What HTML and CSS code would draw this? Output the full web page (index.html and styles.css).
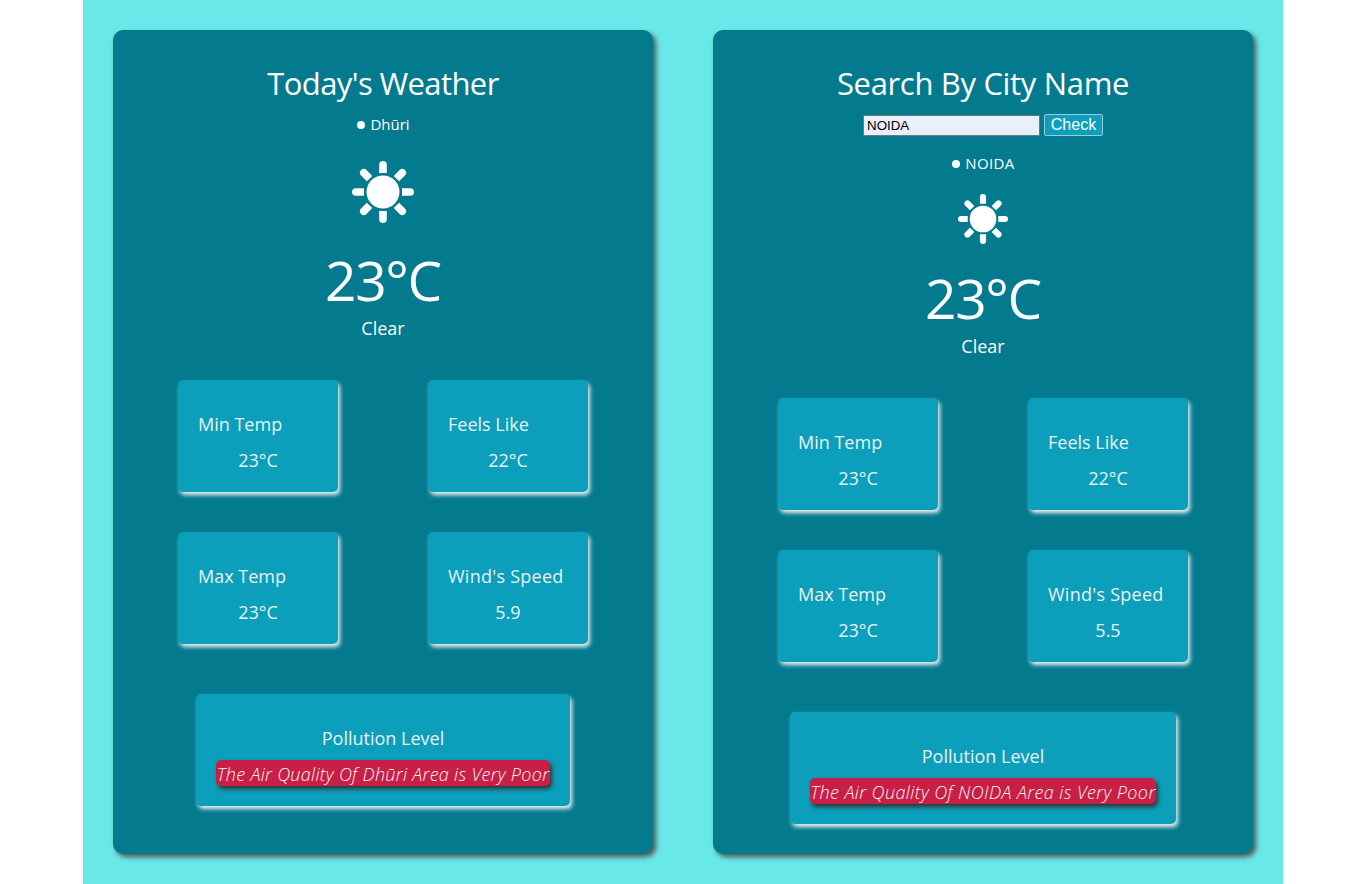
FILE: index.html
```html
<!DOCTYPE html>
<html lang="en">
<head>
<meta charset="utf-8">
<title>Weather</title>
<link rel="stylesheet" href="styles.css">
</head>
<body>
<svg class="defs" width="0" height="0" aria-hidden="true">
  <symbol id="sun" viewBox="0 0 62 62">
    <circle cx="31" cy="31" r="16.5"/>
    <path id="ray" d="M27.2 12V3.8a3.8 3.8 0 0 1 7.6 0V12z"/>
    <use href="#ray" transform="rotate(45 31 31)"/>
    <use href="#ray" transform="rotate(90 31 31)"/>
    <use href="#ray" transform="rotate(135 31 31)"/>
    <use href="#ray" transform="rotate(180 31 31)"/>
    <use href="#ray" transform="rotate(225 31 31)"/>
    <use href="#ray" transform="rotate(270 31 31)"/>
    <use href="#ray" transform="rotate(315 31 31)"/>
  </symbol>
</svg>
<main class="page">
  <section class="panel">
    <h1 class="title title-today">Today's Weather</h1>
    <div class="place"><span class="dot"></span><span class="city">Dhūri</span></div>
    <svg class="sun sun-large"><use href="#sun"/></svg>
    <div class="temp">23°C</div>
    <div class="sky">Clear</div>
    <div class="cards">
      <div class="card"><div class="label">Min Temp</div><div class="value">23°C</div></div>
      <div class="card"><div class="label">Feels Like</div><div class="value">22°C</div></div>
      <div class="card"><div class="label">Max Temp</div><div class="value">23°C</div></div>
      <div class="card"><div class="label label-wind">Wind's Speed</div><div class="value">5.9</div></div>
    </div>
    <div class="card pollution"><div class="label">Pollution Level</div><em class="alert alert-today">The Air Quality Of Dhūri Area is Very Poor</em></div>
  </section>
  <section class="panel">
    <h1 class="title title-search">Search By City Name</h1>
    <form class="search"><input class="field" type="text" value="NOIDA"><button class="check" type="button">Check</button></form>
    <div class="place place-search"><span class="dot"></span><span class="city">NOIDA</span></div>
    <svg class="sun sun-small"><use href="#sun"/></svg>
    <div class="temp">23°C</div>
    <div class="sky">Clear</div>
    <div class="cards">
      <div class="card"><div class="label">Min Temp</div><div class="value">23°C</div></div>
      <div class="card"><div class="label">Feels Like</div><div class="value">22°C</div></div>
      <div class="card"><div class="label">Max Temp</div><div class="value">23°C</div></div>
      <div class="card"><div class="label label-wind">Wind's Speed</div><div class="value">5.5</div></div>
    </div>
    <div class="card pollution pollution-search"><div class="label">Pollution Level</div><em class="alert alert-search">The Air Quality Of NOIDA Area is Very Poor</em></div>
  </section>
</main>
</body>
</html>
```
FILE: styles.css
```css
* { box-sizing: border-box; }
body { margin: 0; background: #fff; font-family: "Open Sans", "Noto Sans", sans-serif; color: #fff; }
.defs { display: block; }
.page { width: 1200px; height: 884px; margin: 0 auto; padding: 30px; display: flex; gap: 60px; background: #68e8e8; overflow: hidden; }
.panel { width: 540px; height: 824px; padding-top: 32px; display: flex; flex-direction: column; align-items: center; background: #037a8e; border-radius: 10px; box-shadow: 3px 3px 5px #555; }
.title { margin: 0; font-size: 31px; font-weight: 400; line-height: 43px; white-space: nowrap; }
.title-today { letter-spacing: -0.6px; }
.title-search { letter-spacing: -0.33px; }
.place { margin-top: 9px; height: 20px; padding-left: 1px; display: flex; align-items: center; gap: 5px; font-size: 15px; line-height: 20px; }
.dot { width: 8px; height: 8px; margin-top: 2px; border-radius: 50%; background: #fff; }
.sun { display: block; fill: #fff; }
.sun-large { width: 62px; height: 62px; margin: 27px 0 20px; }
.sun-small { width: 50px; height: 50px; margin: 21px 0 17px; }
.temp { height: 72px; font-size: 55px; line-height: 74px; letter-spacing: -1.3px; }
.sky { font-size: 18px; line-height: 26px; }
.cards { margin-top: 39px; display: grid; grid-template-columns: 160px 160px; grid-auto-rows: 112px; gap: 40px 90px; }
.card { padding: 30px 20px 20px; background: #0b9fbb; border-radius: 5px; box-shadow: 2px 3px 4px #f0f0f0; color: #e8f2f2; font-size: 18px; line-height: 28px; white-space: nowrap; }
.label { height: 26px; }
.label-wind { letter-spacing: 0.25px; }
.value { height: 26px; margin-top: 10px; text-align: center; }
.pollution { width: 374px; height: 112px; margin-top: 50px; text-align: center; }
.pollution-search { width: 386px; }
.alert { display: flex; justify-content: center; height: 26px; margin-top: 10px; background: #c81f46; border-radius: 5px; box-shadow: 2px 3px 4px #333; color: #f4f4f4; font-weight: 300; }
.alert-today { letter-spacing: 0.3px; }
.alert-search { letter-spacing: 0.4px; }
.search { height: 22px; margin: 9px 0 0; display: flex; align-items: center; gap: 4px; }
.field { width: 177px; height: 21px; margin: 1px 0 0; padding: 1px 3px; border: 1px solid #767676; background: #e8f0fe; color: #000; font: 13.333px "Liberation Sans", Arial, sans-serif; }
.check { width: 59px; height: 22px; padding: 0; background: #0b9fbb; border: 1px solid #9ecbd5; border-radius: 2px; color: #fff; font: 16px/18px "Liberation Sans", Arial, sans-serif; }
.place-search { margin-top: 17px; }
.place-search .city { letter-spacing: 0.4px; }
```
